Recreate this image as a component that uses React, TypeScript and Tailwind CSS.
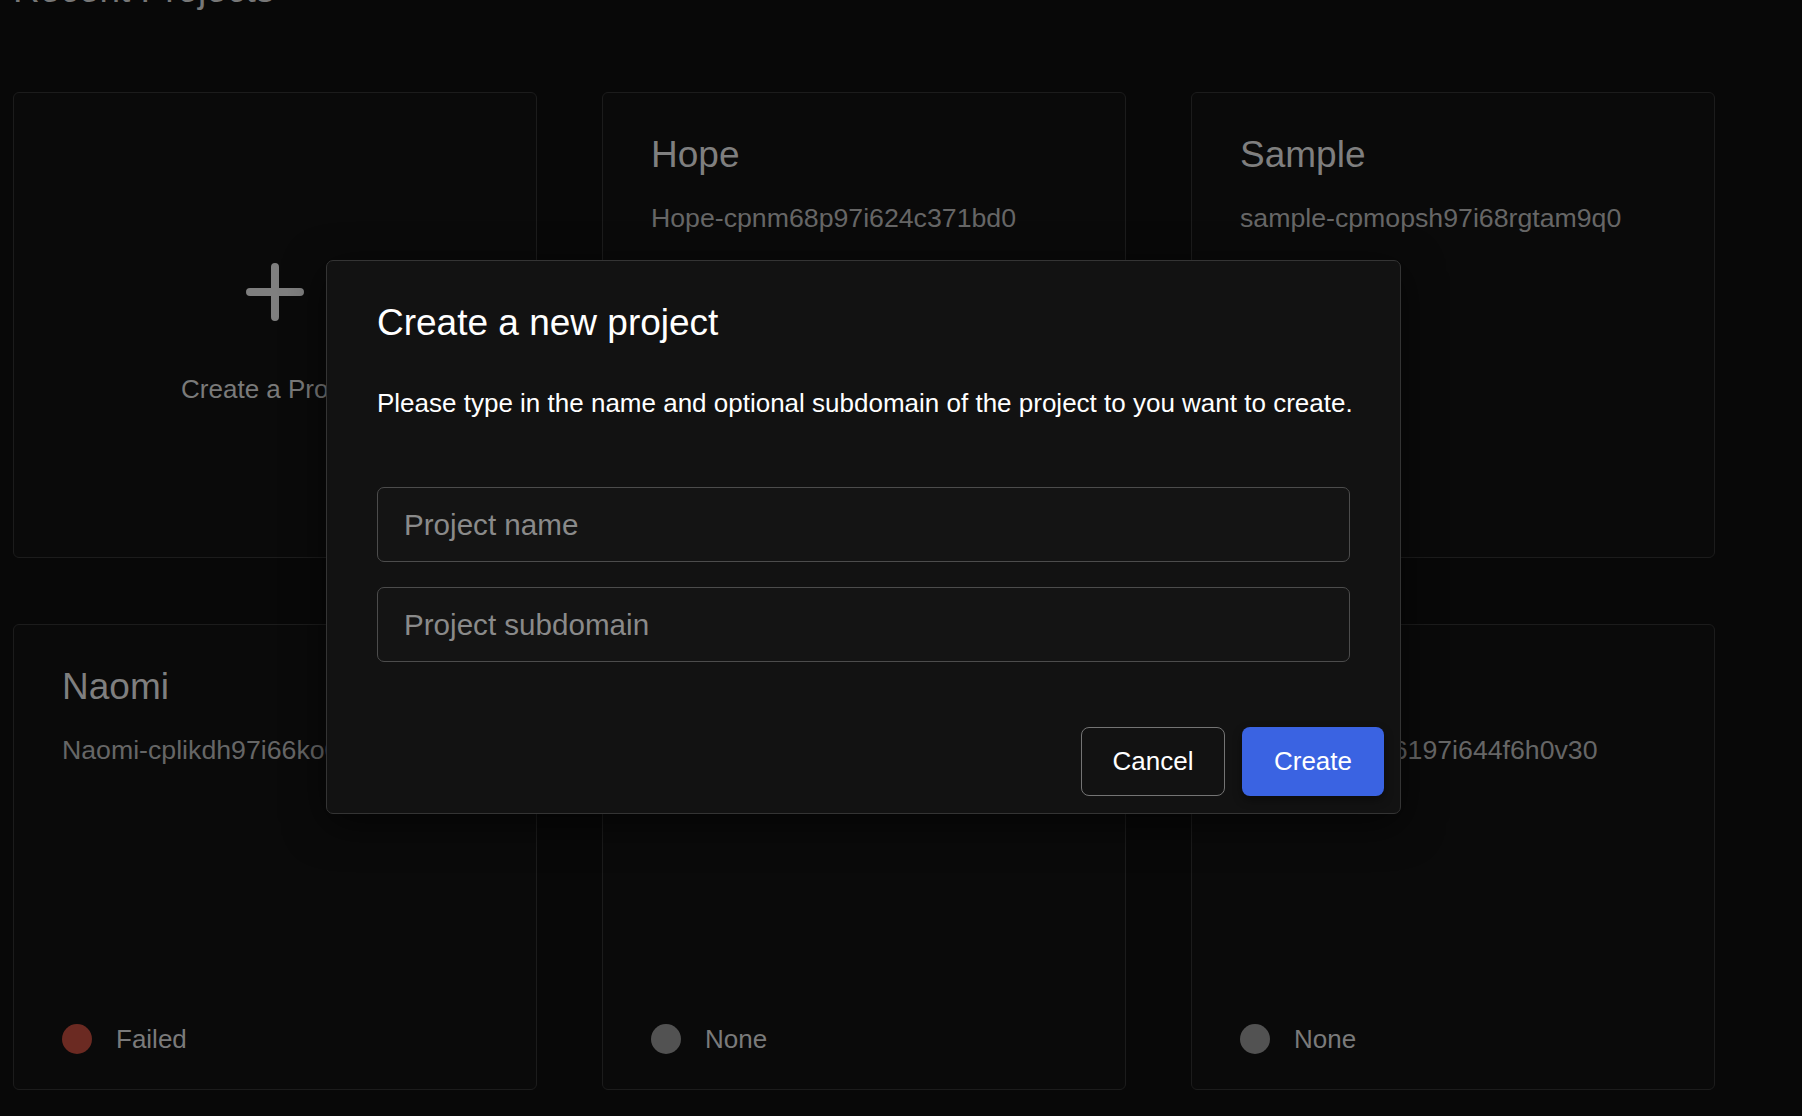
import { useState } from "react";

type Project = {
  name: string;
  slug: string;
  status: "Failed" | "None";
};

const PROJECTS: Project[] = [
  { name: "Hope", slug: "Hope-cpnm68p97i624c371bd0", status: "None" },
  { name: "Sample", slug: "sample-cpmopsh97i68rgtam9q0", status: "None" },
  { name: "Naomi", slug: "Naomi-cplikdh97i66ko0g8h0", status: "Failed" },
  { name: "Test", slug: "test-cpl5n7h97i63dk2ag0", status: "None" },
  { name: "Demo", slug: "Demo-cpmf16197i644f6h0v30", status: "None" },
];

function CreateCard() {
  return (
    <div className="h-[466px] rounded-[6px] border border-[#1c1c1c] bg-[#0a0a0a] flex flex-col items-center justify-center pt-[17px]">
      <svg width="58" height="58" viewBox="0 0 58 58" fill="none">
        <path d="M29 4v50M4 29h50" stroke="#7f7f7f" strokeWidth="8" strokeLinecap="round" />
      </svg>
      <p className="mt-[52px] text-[26px] leading-[32px] text-[#7a7a7a]">Create a Project</p>
    </div>
  );
}

function ProjectCard({ project }: { project: Project }) {
  return (
    <div className="h-[466px] rounded-[6px] border border-[#1c1c1c] bg-[#0a0a0a] flex flex-col pl-[48px] pt-[40px] pb-[34px]">
      <h2 className="text-[37px] leading-[44px] text-[#7f7f7f]">{project.name}</h2>
      <p className="mt-[25px] text-[26.7px] leading-[32px] text-[#666666] whitespace-nowrap">{project.slug}</p>
      <div className="mt-auto flex items-center gap-[24px]">
        <span
          className={
            project.status === "Failed"
              ? "w-[30px] h-[30px] rounded-full bg-[#6b2a22]"
              : "w-[30px] h-[30px] rounded-full bg-[#525252]"
          }
        />
        <span className="text-[26px] leading-[32px] text-[#7a7a7a]">{project.status}</span>
      </div>
    </div>
  );
}

function CreateProjectModal() {
  const [name, setName] = useState("");
  const [subdomain, setSubdomain] = useState("");

  return (
    <div className="absolute left-[326px] top-[260px] w-[1075px] h-[554px] rounded-[7px] border-[1.5px] border-[#343434] bg-[#121212] shadow-[0_10px_40px_rgba(0,0,0,0.6)] flex flex-col">
      <div className="px-[50px] pt-[40px]">
        <h2 className="text-[37px] leading-[44px] text-white">Create a new project</h2>
        <p className="mt-[42px] text-[26px] leading-[32px] text-white whitespace-nowrap">
          Please type in the name and optional subdomain of the project to you want to create.
        </p>
        <input
          value={name}
          onChange={(e) => setName(e.target.value)}
          placeholder="Project name"
          className="mt-[68px] block w-full h-[75px] rounded-[7px] border-[1.5px] border-[#4c4c4c] bg-[#141414] px-[26px] text-[29.6px] text-white placeholder:text-[#8a8a8a] outline-none"
        />
        <input
          value={subdomain}
          onChange={(e) => setSubdomain(e.target.value)}
          placeholder="Project subdomain"
          className="mt-[25px] block w-full h-[75px] rounded-[7px] border-[1.5px] border-[#4c4c4c] bg-[#141414] px-[26px] text-[29.6px] text-white placeholder:text-[#8a8a8a] outline-none"
        />
      </div>
      <div className="mt-auto flex justify-end gap-[17px] pr-[16px] pb-[17px]">
        <button className="w-[144px] h-[69px] rounded-[8px] border-[1.5px] border-[#747474] bg-transparent text-[26px] text-white">
          Cancel
        </button>
        <button className="w-[142px] h-[69px] rounded-[8px] bg-[#3a63e2] text-[26px] text-white shadow-[0_4px_10px_rgba(0,0,0,0.4)]">
          Create
        </button>
      </div>
    </div>
  );
}

export default function App() {
  return (
    <main className="relative w-[1802px] h-[1116px] overflow-hidden bg-[#080808] font-['Liberation_Sans',Arial,sans-serif]">
      <div className="px-[13px]">
        <h1 className="mt-[-29px] text-[37px] leading-[37px] text-[#777777]">Recent Projects</h1>
        <div className="mt-[84px] grid grid-cols-[524px_524px_524px] gap-x-[65px] gap-y-[66px]">
          <CreateCard />
          {PROJECTS.map((p) => (
            <ProjectCard key={p.slug} project={p} />
          ))}
        </div>
      </div>
      <CreateProjectModal />
    </main>
  );
}
